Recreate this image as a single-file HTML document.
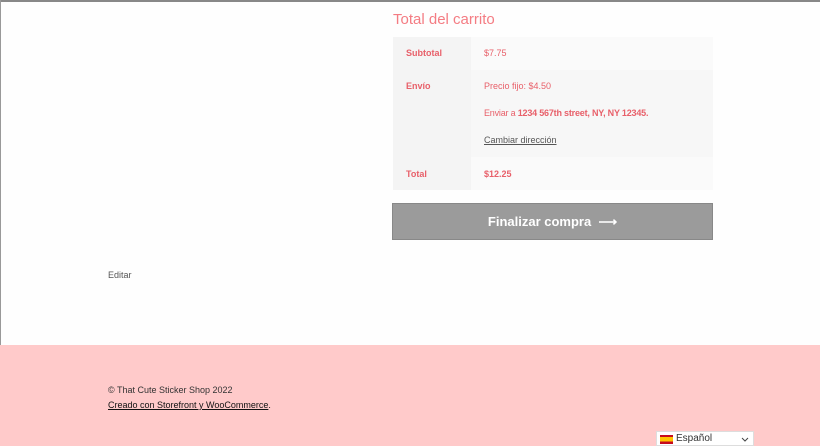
<!DOCTYPE html>
<html><head><style>
body{margin:0;width:820px;height:446px;overflow:hidden;background:#fefefe;font-family:"Liberation Sans",sans-serif;position:relative}
.a{position:absolute}
.lbl{color:#e8606a;font-size:9px;font-weight:bold}
.val{color:#e8606a;font-size:9px}
</style></head><body>
<div class="a" style="left:0;top:0;width:820px;height:2px;background:#888"></div>
<div class="a" style="left:0;top:0;width:1px;height:345px;background:#999"></div>
<div class="a" style="left:393px;top:11px;color:#f47c83;font-size:15px">Total del carrito</div>
<div class="a" style="left:393px;top:37px;width:320px;height:153px;background:#fafafa"></div>
<div class="a" style="left:393px;top:37px;width:78px;height:153px;background:#f4f4f4"></div>
<div class="a" style="left:471px;top:70px;width:242px;height:87px;background:#f7f7f7"></div>
<div class="a lbl" style="left:406px;top:48px">Subtotal</div>
<div class="a val" style="left:484px;top:48px">$7.75</div>
<div class="a lbl" style="left:406px;top:81px">Envío</div>
<div class="a val" style="left:484px;top:81px">Precio fijo: $4.50</div>
<div class="a val" style="left:484px;top:108px;letter-spacing:-0.2px">Enviar a <b>1234 567th street, NY, NY 12345.</b></div>
<div class="a" style="left:484px;top:135px;font-size:9px;color:#555;text-decoration:underline">Cambiar dirección</div>
<div class="a lbl" style="left:406px;top:169px">Total</div>
<div class="a lbl" style="left:484px;top:169px">$12.25</div>
<div class="a" style="left:392px;top:203px;width:319px;height:35px;background:#9b9b9b;border:1px solid #888;color:#fff;font-weight:bold;font-size:13px;text-align:center;line-height:36px">Finalizar compra &nbsp;⟶</div>
<div class="a" style="left:108px;top:270px;font-size:9px;color:#555">Editar</div>
<div class="a" style="left:0;top:345px;width:820px;height:101px;background:#ffcaca"></div>
<div class="a" style="left:108px;top:385px;font-size:9px;color:#333">© That Cute Sticker Shop 2022</div>
<div class="a" style="left:108px;top:400px;font-size:9px;color:#111"><span style="text-decoration:underline">Creado con Storefront y WooCommerce</span>.</div>
<div class="a" style="left:656px;top:431px;width:98px;height:15px;background:#fff;border:1px solid #ddd;box-sizing:border-box;font-size:10px;color:#333">
<div class="a" style="left:3px;top:3px;width:13px;height:9px;background:linear-gradient(#c60b1e 25%,#ffc400 25%,#ffc400 75%,#c60b1e 75%)"></div>
<span class="a" style="left:19px;top:1px">Español</span>
<svg class="a" style="left:84px;top:5px" width="8" height="5" viewBox="0 0 8 5"><path d="M1 1 L4 4 L7 1" fill="none" stroke="#444" stroke-width="1"/></svg></div>
</body></html>
